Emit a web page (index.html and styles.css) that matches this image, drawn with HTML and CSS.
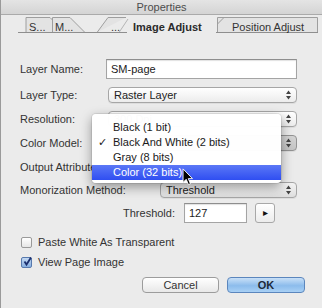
FILE: index.html
```html
<!DOCTYPE html>
<html lang="en">
<head>
  <meta charset="UTF-8">
  <title>Properties</title>
  <link rel="stylesheet" href="styles.css">
</head>
<body>
  <div class="window">
    <div class="titlebar">Properties</div>

    <!-- Tabs -->
    <div class="tabs">
      <svg class="tab-lines" width="322" height="17" viewBox="0 0 322 17">
        <path d="M26 16.5 V1.5 H50 L53 4.5 V16.5" fill="#e3e3e3" stroke="#9e9e9e"/>
        <path d="M52.5 16.5 V1.5 H70 L85 16.5" fill="#e3e3e3" stroke="#9e9e9e"/>
        <path d="M97 16.5 L108 1.5 H126" fill="#e3e3e3" stroke="#9e9e9e"/>
        <path d="M119 16.5 L128 3" fill="none" stroke="#b4b4b4"/>
        <path d="M217.5 16.5 V1.5 H317.5 V16.5" fill="#e3e3e3" stroke="#9e9e9e"/>
        <path d="M217.5 8 L224 1.5" fill="none" stroke="#9e9e9e"/>
        <path d="M18 16.5 H127 M216 16.5 H318" stroke="#8e8e8e"/>
      </svg>
      <span class="tab tab-s">S...</span>
      <span class="tab tab-m">M...</span>
      <span class="tab tab-dots">...</span>
      <span class="tab tab-active">Image Adjust</span>
      <span class="tab">Position Adjust</span>
    </div>

    <!-- Form -->
    <div class="form">
      <div class="row first">
        <span class="lbl">Layer Name:</span>
        <div class="text-input wide">SM-page</div>
      </div>
      <div class="row gap">
        <span class="lbl">Layer Type:</span>
        <div class="select">Raster Layer<svg class="updown" width="5" height="10" viewBox="0 0 5 10"><path d="M0 4 L2.5 0.5 L5 4 Z M0 6 L5 6 L2.5 9.5 Z" fill="#444"/></svg></div>
      </div>
      <div class="row">
        <span class="lbl">Resolution:</span>
        <div class="select">300 Dpi<svg class="updown" width="5" height="10" viewBox="0 0 5 10"><path d="M0 4 L2.5 0.5 L5 4 Z M0 6 L5 6 L2.5 9.5 Z" fill="#444"/></svg></div>
      </div>
      <div class="row">
        <span class="lbl">Color Model:</span>
        <div class="select pressed">Black And White (2 bits)<svg class="updown" width="5" height="10" viewBox="0 0 5 10"><path d="M0 4 L2.5 0.5 L5 4 Z M0 6 L5 6 L2.5 9.5 Z" fill="#444"/></svg></div>
      </div>
      <div class="row short">
        <span class="lbl">Output Attribute:</span>
      </div>
      <div class="row short">
        <span class="lbl">Monorization Method:</span>
        <div class="select method">Threshold<svg class="updown" width="5" height="10" viewBox="0 0 5 10"><path d="M0 4 L2.5 0.5 L5 4 Z M0 6 L5 6 L2.5 9.5 Z" fill="#444"/></svg></div>
      </div>
      <div class="row">
        <span class="lbl threshold-lbl">Threshold:</span>
        <div class="text-input small">127</div>
        <div class="step-btn">&#9656;</div>
      </div>

      <div class="check-row top">
        <span class="checkbox"></span>
        <span>Paste White As Transparent</span>
      </div>
      <div class="check-row">
        <span class="checkbox checked">
          <svg width="11" height="11" viewBox="0 0 11 11"><path d="M2.5 5.5 L4.5 8.5 L9 1.5" fill="none" stroke="#1b2f6e" stroke-width="1.8"/></svg>
        </span>
        <span>View Page Image</span>
      </div>

      <div class="buttons">
        <div class="btn cancel">Cancel</div>
        <div class="btn ok">OK</div>
      </div>
    </div>

    <!-- Open popup for Color Model -->
    <div class="popup">
      <div class="item">Black (1 bit)</div>
      <div class="item"><span class="tick">&#10003;</span>Black And White (2 bits)</div>
      <div class="item">Gray (8 bits)</div>
      <div class="item selected">Color (32 bits)</div>
    </div>

    <svg class="cursor" width="12" height="18" viewBox="0 0 13 20">
      <path d="M1 1 L1 16 L4.5 12.5 L7 18.5 L9.2 17.6 L6.8 11.8 L11.5 11.8 Z" fill="#000" stroke="#fff" stroke-width="1"/>
    </svg>
  </div>
</body>
</html>
```

FILE: styles.css
```css
/* General */
body {
  margin: 0;
  font-family: "Liberation Sans", Arial, sans-serif;
  font-size: 11px;
  color: #2a2a2a;
  background-color: #ebebeb;
  overflow: hidden;
}

.window {
  position: relative;
  width: 321px;
  height: 308px;
  border-left: 1px solid #9a9a9a;
  background-color: #ebebeb;
}

/* Title bar */
.titlebar {
  height: 14px;
  line-height: 14px;
  text-align: center;
  color: #4d4d4d;
  background: linear-gradient(#e4e4e4, #d4d4d4);
  border-bottom: 1px solid #aaaaaa;
}

/* Tabs */
.tabs {
  position: relative;
  display: flex;
  align-items: center;
  height: 17px;
  margin-top: 1px;
  padding-left: 28px;
}

.tab-lines {
  position: absolute;
  left: -1px;
  top: 0;
}

.tab {
  position: relative;
  padding-top: 5px;
  color: #333;
}

.tab-s { width: 26px; }
.tab-m { width: 56px; }
.tab-dots { width: 22px; }

.tab-active {
  width: 99px;
  font-weight: bold;
  color: #2a2a2a;
}

/* Form */
.form {
  padding-top: 24px;
  padding-left: 19px;
}

.row {
  display: flex;
  align-items: center;
  height: 24px;
}

.row.gap { margin-top: 2px; }
.row.short { height: 23px; }

.lbl {
  width: 86px;
  flex-shrink: 0;
  white-space: nowrap;
  color: #333;
}

.text-input {
  box-sizing: border-box;
  height: 20px;
  line-height: 19px;
  padding-left: 4px;
  background-color: #fff;
  border: 1px solid #a4a4a4;
  border-top-color: #8e8e8e;
  box-shadow: inset 0 1px 1px rgba(0, 0, 0, 0.12);
  color: #222;
}

.text-input.wide { width: 191px; }

.text-input.small {
  width: 63px;
  margin-left: 9px;
}

.select {
  box-sizing: border-box;
  display: flex;
  align-items: center;
  justify-content: space-between;
  width: 189px;
  height: 16px;
  margin-left: 2px;
  padding: 0 5px 0 5px;
  border: 1px solid #a6a6a6;
  border-radius: 4px;
  background: linear-gradient(#ffffff, #ececec);
  box-shadow: 0 1px 0 rgba(0, 0, 0, 0.06);
  color: #222;
  white-space: nowrap;
  overflow: hidden;
}

.select.pressed {
  background: linear-gradient(#d4d4d4, #c4c4c4);
  border-color: #939393;
}

.select.method {
  width: 137px;
  margin-left: 54px;
  background: linear-gradient(#f4f4f4, #dedede);
}

.updown {
  flex-shrink: 0;
}

.threshold-lbl {
  width: 155px;
  text-align: right;
}

.step-btn {
  box-sizing: border-box;
  width: 20px;
  height: 20px;
  margin-left: 8px;
  line-height: 18px;
  text-align: center;
  font-size: 10px;
  color: #111;
  border: 1px solid #a8a8a8;
  border-radius: 3px;
  background: linear-gradient(#ffffff, #ececec);
}

/* Checkboxes */
.check-row {
  display: flex;
  align-items: center;
  height: 20px;
  color: #333;
}

.check-row.top { margin-top: 7px; }

.checkbox {
  box-sizing: border-box;
  width: 11px;
  height: 11px;
  margin-left: 1px;
  margin-right: 6px;
  border: 1px solid #9a9a9a;
  border-radius: 2px;
  background: linear-gradient(#ffffff, #e6e6e6);
}

.checkbox.checked {
  position: relative;
  border-color: #5779ad;
  background: linear-gradient(#c4d9f2, #86aee0);
}

.checkbox.checked svg {
  position: absolute;
  left: 0;
  top: -2px;
}

/* Buttons */
.buttons {
  display: flex;
  margin-top: 5px;
}

.btn {
  box-sizing: border-box;
  height: 16px;
  line-height: 14px;
  text-align: center;
  border-radius: 4px;
}

.btn.cancel {
  width: 77px;
  margin-left: 122px;
  border: 1px solid #9c9c9c;
  background: linear-gradient(#ffffff, #e8e8e8);
  color: #333;
}

.btn.ok {
  width: 78px;
  margin-left: 8px;
  border: 1px solid #5b86bd;
  background: linear-gradient(#c9e0f7, #8cbcec 55%, #a8d0f5);
  font-weight: bold;
  color: #1c2a3a;
}

/* Popup menu */
.popup {
  position: absolute;
  left: 91px;
  top: 114px;
  width: 189px;
  padding: 6px 0 3px 0;
  background-color: rgba(255, 255, 255, 0.98);
  border-radius: 4px;
  box-shadow: 0 4px 12px rgba(0, 0, 0, 0.38), 0 0 0 1px rgba(0, 0, 0, 0.08);
}

.item {
  position: relative;
  height: 15px;
  line-height: 15px;
  padding-left: 21px;
  color: #1a1a1a;
  white-space: nowrap;
}

.tick {
  position: absolute;
  left: 6px;
}

.item.selected {
  background: linear-gradient(#5b78f6, #2f4ef1);
  color: #fff;
}

.cursor {
  position: absolute;
  left: 181px;
  top: 168px;
}
```
